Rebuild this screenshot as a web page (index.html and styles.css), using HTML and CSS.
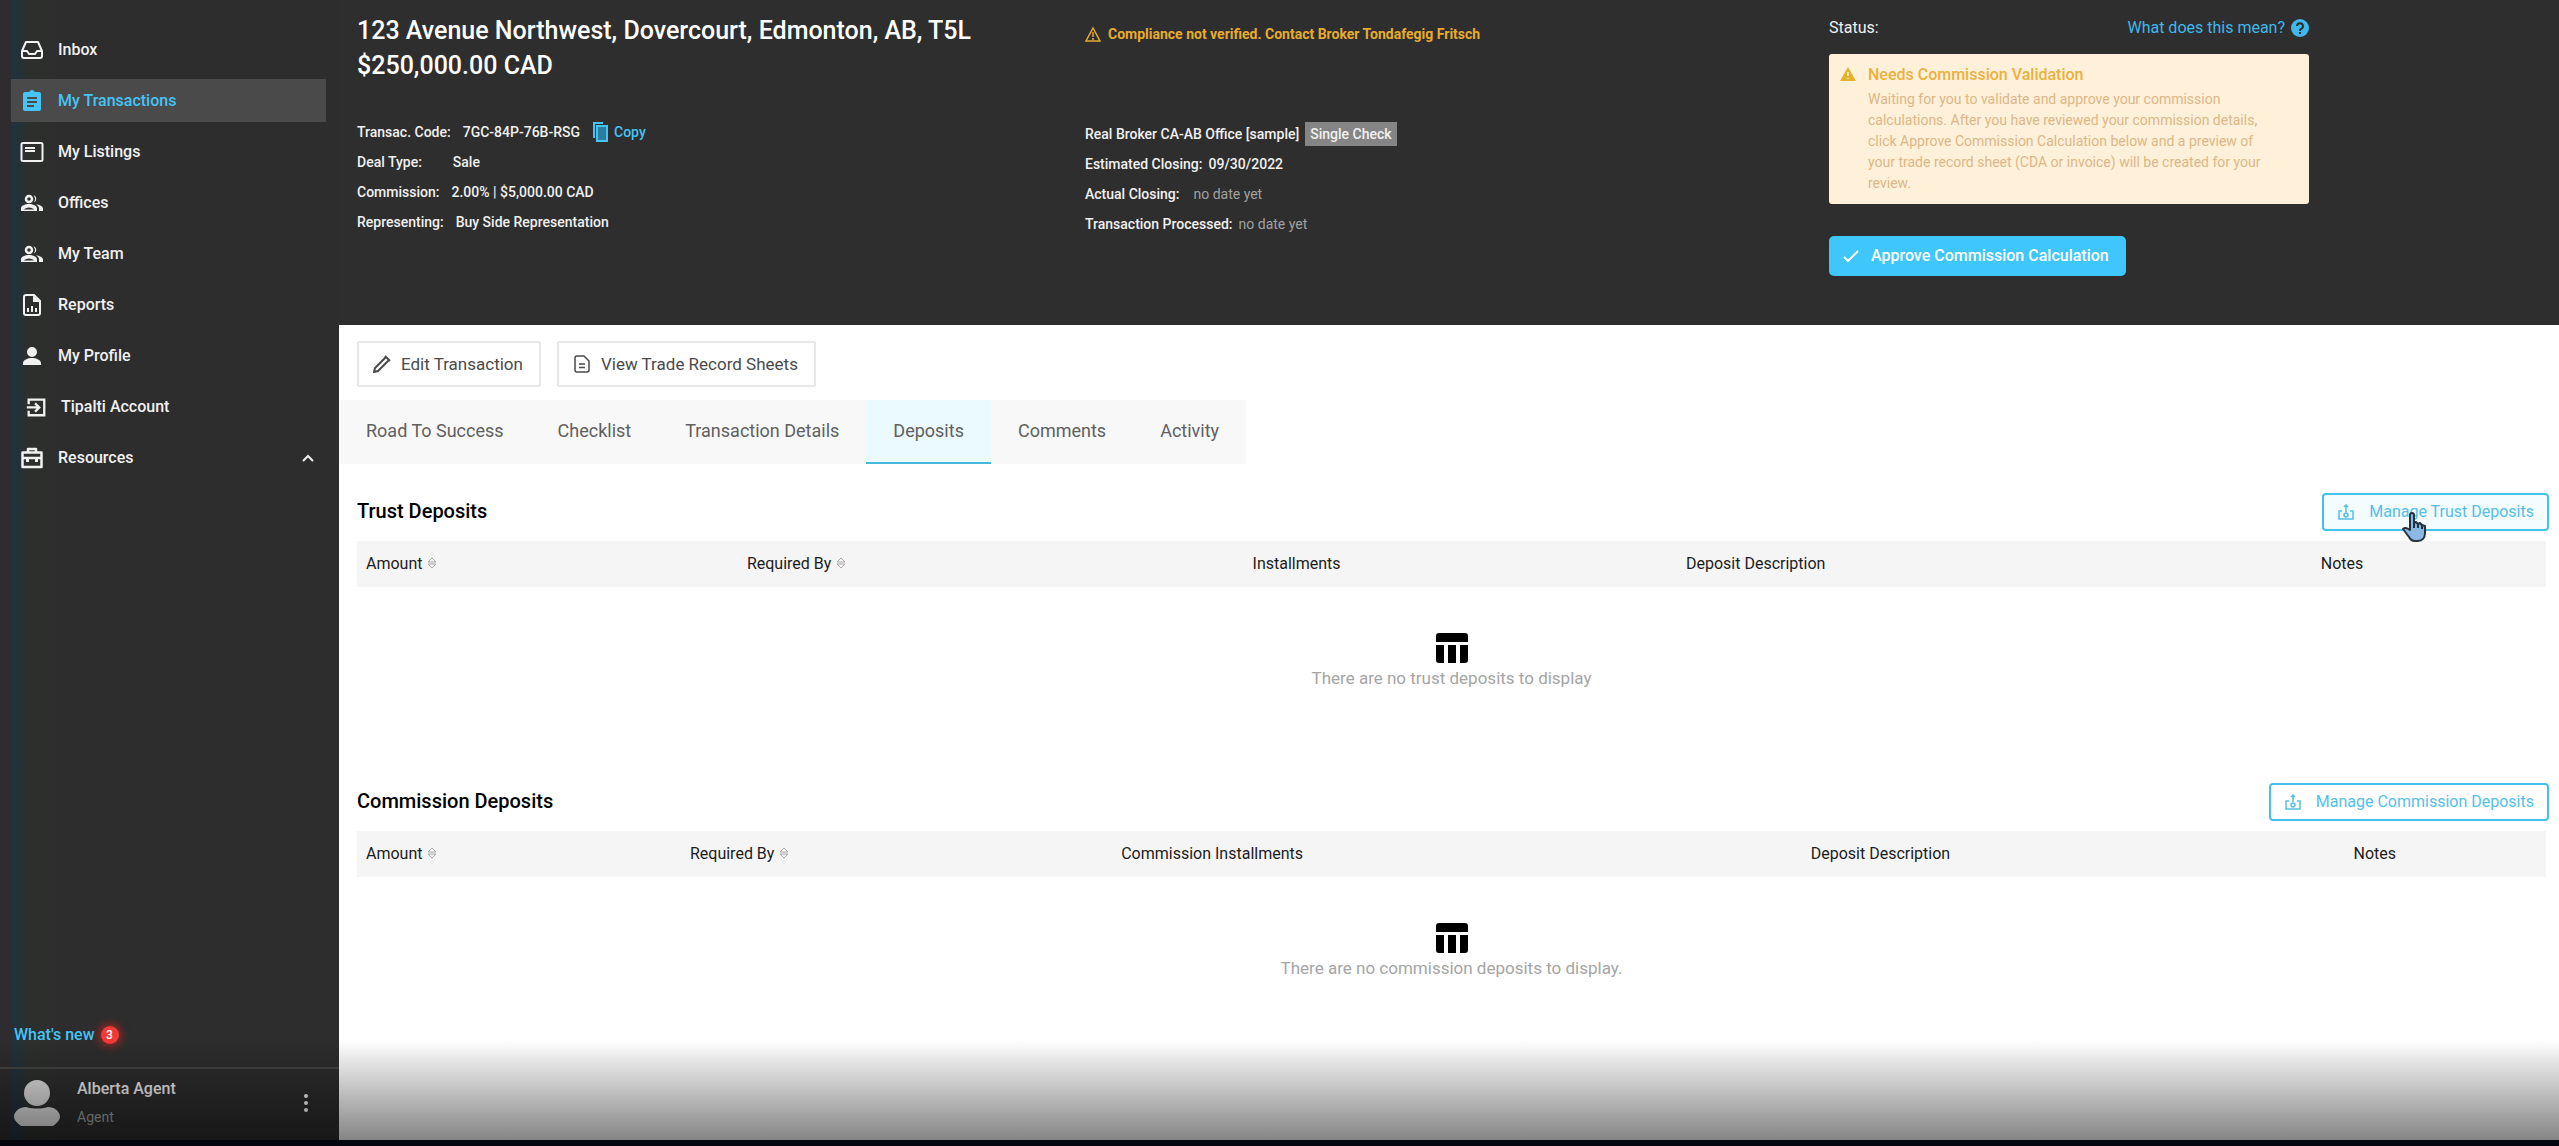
FILE: index.html
```html
<!DOCTYPE html>
<html lang="en">
<head>
<meta charset="utf-8">
<title>Transaction Deposits</title>
<link rel="stylesheet" href="styles.css">
</head>
<body>
<div class="app">
  <aside class="sidebar">
    <nav class="nav" aria-label="Main">
      <a class="nav-item" href="#"><svg class="icon" viewBox="0 0 24 24"><path d="M6 4h12l4 9v5a2 2 0 0 1-2 2H4a2 2 0 0 1-2-2v-5zM2 13h5l2 3h6l2-3h5" fill="none" stroke="currentColor" stroke-width="2" stroke-linejoin="round"/></svg><span>Inbox</span></a>
      <a class="nav-item active" href="#" aria-current="page"><svg class="icon" viewBox="0 0 24 24"><path fill="currentColor" d="M19 3h-4.200a3 3 0 0 0-5.600 0H5a2 2 0 0 0-2 2v15a2 2 0 0 0 2 2h14a2 2 0 0 0 2-2V5a2 2 0 0 0-2-2zm-5 15H7v-2h7zm3-4H7v-2h10zm0-4H7V8h10z"/></svg><span>My Transactions</span></a>
      <a class="nav-item" href="#"><svg class="icon" viewBox="0 0 24 24"><rect x="1.500" y="3" width="21" height="18" rx="1.500" fill="none" stroke="currentColor" stroke-width="2"/><path fill="currentColor" d="M5 7h10v2H5zm0 3h10v2H5z"/></svg><span>My Listings</span></a>
      <a class="nav-item" href="#"><svg class="icon" viewBox="0 0 24 24"><circle cx="9" cy="8" r="3" fill="none" stroke="currentColor" stroke-width="2.500"/><path fill="currentColor" d="M13.500 4.200a4 4 0 0 1 0 7.600 6 6 0 0 0 0-7.600zM1 20v-2.500C1 14.500 5 13 9 13s8 1.500 8 4.500V20zm3-1.500h10c-.5-1-3-2-5-2s-4.500 1-5 2zM16 13.200c3.500.5 7 1.800 7 4.300V20h-4v-2.500c0-1.800-1-3.200-3-4.300z"/></svg><span>Offices</span></a>
      <a class="nav-item" href="#"><svg class="icon" viewBox="0 0 24 24"><circle cx="9" cy="8" r="3" fill="none" stroke="currentColor" stroke-width="2.500"/><path fill="currentColor" d="M13.500 4.200a4 4 0 0 1 0 7.600 6 6 0 0 0 0-7.600zM1 20v-2.500C1 14.500 5 13 9 13s8 1.500 8 4.500V20zm3-1.500h10c-.5-1-3-2-5-2s-4.500 1-5 2zM16 13.200c3.500.5 7 1.800 7 4.300V20h-4v-2.500c0-1.800-1-3.200-3-4.300z"/></svg><span>My Team</span></a>
      <a class="nav-item" href="#"><svg class="icon" viewBox="0 0 24 24"><path d="M14 2H6a2 2 0 0 0-2 2v16a2 2 0 0 0 2 2h12a2 2 0 0 0 2-2V8z" fill="none" stroke="currentColor" stroke-width="2"/><path fill="currentColor" d="M13 2l7 7h-7zM7 15h2v4H7zm4-2h2v6h-2zm4 2h2v4h-2z"/></svg><span>Reports</span></a>
      <a class="nav-item" href="#"><svg class="icon" viewBox="0 0 24 24"><path fill="currentColor" d="M12 3a5 5 0 1 1 0 10 5 5 0 0 1 0-10zM3 21v-2c0-3 5-5 9-5s9 2 9 5v2z"/></svg><span>My Profile</span></a>
      <a class="nav-item indented" href="#"><svg class="icon" viewBox="0 0 24 24"><path d="M4 9V4h17v17H4v-5M2 12.500h13M11 8l4.500 4.500L11 17" fill="none" stroke="currentColor" stroke-width="2.500"/></svg><span>Tipalti Account</span></a>
      <a class="nav-item" href="#"><svg class="icon" viewBox="0 0 24 24"><path d="M8 6V3h8v3M2.500 6.500h19v14.500h-19zM2 12h20" fill="none" stroke="currentColor" stroke-width="2.500" stroke-linejoin="round"/><path fill="currentColor" d="M6 12h3v4H6zm9 0h3v4h-3z"/></svg><span>Resources</span><svg class="chevron" viewBox="0 0 12 12"><path d="M1 9l5-5 5 5" fill="none" stroke="currentColor" stroke-width="2"/></svg></a>
    </nav>
    <a class="whats-new" href="#"><span>What's new</span><span class="count">3</span></a>
    <div class="profile">
      <svg class="avatar" viewBox="0 0 46 46"><circle cx="23" cy="13" r="13"/><path d="M7 46C3 43 0 40 0 37c0-6 6-10 12-10 7 2 15 2 22 0 6 0 12 4 12 10 0 3-3 6-7 9z"/></svg>
      <div class="who"><span class="who-name">Alberta Agent</span><span class="who-role">Agent</span></div>
      <button class="more" aria-label="Account menu"><svg viewBox="0 0 6 20"><circle cx="3" cy="3" r="2"/><circle cx="3" cy="10" r="2"/><circle cx="3" cy="17" r="2"/></svg></button>
    </div>
  </aside>

  <main class="main">
    <header class="summary">
      <section>
        <h1 class="title">123 Avenue Northwest, Dovercourt, Edmonton, AB, T5L<br>$250,000.00 CAD</h1>
        <div class="facts">
          <p><span>Transac. Code:</span><span>7GC-84P-76B-RSG</span><button class="copy"><svg viewBox="0 0 16 20"><path d="M2 16V1h9" fill="none" stroke="currentColor" stroke-width="2"/><rect x="5" y="4" width="10" height="15" fill="#2c7d9d" stroke="currentColor" stroke-width="2"/></svg>Copy</button></p>
          <p class="wide"><span>Deal Type:</span><span>Sale</span></p>
          <p><span>Commission:</span><span>2.00% | $5,000.00 CAD</span></p>
          <p><span>Representing:</span><span>Buy Side Representation</span></p>
        </div>
      </section>
      <section>
        <p class="compliance"><svg viewBox="0 0 16 16"><path d="M8 2l7 13H1zM8 6v5M8 12v2" fill="none" stroke="currentColor" stroke-width="1.500"/></svg>Compliance not verified. Contact Broker Tondafegig Fritsch</p>
        <div class="facts tight">
          <p><span>Real Broker CA-AB Office [sample]</span><span class="tag">Single Check</span></p>
          <p><span>Estimated Closing:</span><span>09/30/2022</span></p>
          <p class="wide"><span>Actual Closing:</span><span class="none">no date yet</span></p>
          <p><span>Transaction Processed:</span><span class="none">no date yet</span></p>
        </div>
      </section>
      <section class="status">
        <div class="status-head"><span>Status:</span><a class="help" href="#">What does this mean?<svg viewBox="0 0 18 18"><circle cx="9" cy="9" r="9" fill="currentColor"/><path d="M6 7a3 3 0 1 1 4 3q-1 .5-1 2M9 13v2" fill="none" stroke="#2e2e2e" stroke-width="2"/></svg></a></div>
        <div class="notice">
          <svg viewBox="0 0 16 16"><path d="M8 1l8 14H0z" fill="#e3b32e"/><path d="M8 6v4M8 12v1" stroke="#fff0da" stroke-width="1.500"/></svg>
          <div><h2>Needs Commission Validation</h2>
          <p>Waiting for you to validate and approve your commission calculations. After you have reviewed your commission details, click Approve Commission Calculation below and a preview of your trade record sheet (CDA or invoice) will be created for your review.</p></div>
        </div>
        <button class="approve"><svg viewBox="0 0 16 16"><path d="M1 9l4 4L15 3" fill="none" stroke="currentColor" stroke-width="2"/></svg>Approve Commission Calculation</button>
      </section>
    </header>

    <div class="content">
      <div class="actions">
        <button class="plain"><svg viewBox="0 0 18 18"><path d="M1 17l1-4L13 2l3 3L5 16zM12 1l5 5" fill="none" stroke="currentColor" stroke-width="2"/></svg>Edit Transaction</button>
        <button class="plain"><svg viewBox="0 0 18 18"><path d="M4 1h7l5 5v9a2 2 0 0 1-2 2H4a2 2 0 0 1-2-2V3a2 2 0 0 1 2-2zM6 9h6M6 12.500h6" fill="none" stroke="currentColor" stroke-width="1.500" stroke-linejoin="round"/></svg>View Trade Record Sheets</button>
      </div>
      <nav class="tabs" aria-label="Transaction sections">
        <a href="#">Road To Success</a><a href="#">Checklist</a><a href="#">Transaction Details</a><a class="current" href="#">Deposits</a><a href="#">Comments</a><a href="#">Activity</a>
      </nav>

      <section class="panel">
        <div class="panel-head"><h2>Trust Deposits</h2>
          <button class="outline hovered"><svg viewBox="0 0 18 18"><path d="M5 8H2v8h14V8h-3M9 9V2M7 4l2-2 2 2" fill="none" stroke="currentColor" stroke-width="1.500"/><circle cx="9" cy="12" r="2" fill="none" stroke="currentColor" stroke-width="1.500"/></svg>Manage Trust Deposits<svg class="pointer" viewBox="0 0 24 30"><path d="M8 17V3a2 2 0 0 1 4 0v8l2-1 2 2 2-1 2 2 3 1v7c0 5-3 8-7 8h-3c-3 0-5-2-6-4l-6-8c1-2 4-1 7 1z" fill="#8bb8e4" stroke="#26323e" stroke-width="2" stroke-linejoin="round"/><path d="M12 10v6M16 11v5M20 13v4" stroke="#26323e" stroke-width="2"/></svg></button></div>
        <table>
          <colgroup><col class="t1"><col class="t2"><col class="t3"><col class="t4"><col></colgroup>
          <thead><tr><th>Amount<svg viewBox="0 0 10 12"><path d="M1 5l4-4 4 4zM1 7l4 4 4-4z" fill="none" stroke="currentColor"/></svg></th><th>Required By<svg viewBox="0 0 10 12"><path d="M1 5l4-4 4 4zM1 7l4 4 4-4z" fill="none" stroke="currentColor"/></svg></th><th>Installments</th><th>Deposit Description</th><th>Notes</th></tr></thead>
          <tbody><tr><td colspan="5"><svg viewBox="0 0 32 30"><path d="M3 0h26a3 3 0 0 1 3 3v6H0V3a3 3 0 0 1 3-3zM0 12h8v18H3a3 3 0 0 1-3-3zM12 12h8v18h-8zM24 12h8v15a3 3 0 0 1-3 3h-5z"/></svg><p>There are no trust deposits to display</p></td></tr></tbody>
        </table>
      </section>

      <section class="panel">
        <div class="panel-head"><h2>Commission Deposits</h2>
          <button class="outline"><svg viewBox="0 0 18 18"><path d="M5 8H2v8h14V8h-3M9 9V2M7 4l2-2 2 2" fill="none" stroke="currentColor" stroke-width="1.500"/><circle cx="9" cy="12" r="2" fill="none" stroke="currentColor" stroke-width="1.500"/></svg>Manage Commission Deposits</button></div>
        <table>
          <colgroup><col class="c1"><col class="c2"><col class="c3"><col class="c4"><col></colgroup>
          <thead><tr><th>Amount<svg viewBox="0 0 10 12"><path d="M1 5l4-4 4 4zM1 7l4 4 4-4z" fill="none" stroke="currentColor"/></svg></th><th>Required By<svg viewBox="0 0 10 12"><path d="M1 5l4-4 4 4zM1 7l4 4 4-4z" fill="none" stroke="currentColor"/></svg></th><th>Commission Installments</th><th>Deposit Description</th><th>Notes</th></tr></thead>
          <tbody><tr><td colspan="5"><svg viewBox="0 0 32 30"><path d="M3 0h26a3 3 0 0 1 3 3v6H0V3a3 3 0 0 1 3-3zM0 12h8v18H3a3 3 0 0 1-3-3zM12 12h8v18h-8zM24 12h8v15a3 3 0 0 1-3 3h-5z"/></svg><p>There are no commission deposits to display.</p></td></tr></tbody>
        </table>
      </section>
    </div>
  </main>
  <div class="fade"></div>
</div>
</body>
</html>
```
FILE: styles.css
```css
* { box-sizing: border-box; }
body, h1, h2, p { margin: 0; font-weight: 500; }
body { font: 16px/20px Roboto, sans-serif; background: #05050d; }
button { font: inherit; cursor: pointer; }
a { color: inherit; text-decoration: none; }
svg { flex: none; display: block; }

.app { position: relative; display: flex; min-height: calc(100vh - 6px); margin-bottom: 6px; }
.fade { position: absolute; left: 0; right: 0; bottom: 0; height: 100px; pointer-events: none; background: linear-gradient(transparent, rgba(0, 0, 0, .48)); }

/* Sidebar */
.sidebar { flex: 0 0 339px; display: flex; flex-direction: column; color: #f1f1f1; font-weight: 500; background: linear-gradient(90deg, #2e2c2e 10px, #23313a 12px, #23313a 18px, #2c302c 28px, #2d2d2d 60px, #2d2d2d); }
.nav { display: flex; flex-direction: column; gap: 8px; padding: 28px 13px 0 11px; }
.nav-item { display: flex; align-items: center; gap: 14px; height: 43px; padding: 0 12px 0 9px; }
.nav-item.active { color: #45c4f5; background: #4a4a4a; }
.nav-item.indented { padding-left: 14px; }
.indented .icon { width: 22px; height: 22px; }
.icon { width: 24px; height: 24px; }
.chevron { width: 12px; height: 12px; margin-left: auto; }
.whats-new { display: flex; align-items: center; gap: 6px; margin-top: auto; padding: 0 14px 22px; color: #45c4f5; }
.count { width: 18px; border-radius: 9px; font-size: 12px; line-height: 18px; text-align: center; color: #fff; background: #f03a35; box-shadow: 0 0 8px 2px #a02824; }
.profile { display: flex; align-items: center; height: 73px; padding: 0 30px 4px 14px; border-top: 2px solid #444; }
.avatar { width: 46px; height: 46px; fill: #e0e0e0; }
.who { display: flex; flex-direction: column; gap: 8px; margin-left: 17px; }
.who-role { font-size: 14px; font-weight: 400; color: #a0a0a0; }
.more { margin-left: auto; padding: 0; border: 0; background: none; }
.more svg { width: 6px; height: 20px; fill: #fff; }

/* Transaction summary */
.main { flex: 1; min-width: 0; display: flex; flex-direction: column; }
.summary { display: grid; grid-template-columns: 728fr 744fr 720fr; min-height: 325px; padding: 12px 10px 0 18px; color: #f1f1f1; font-size: 14px; background: #2e2e2e; }
.title { padding-top: 1px; font-size: 25px; line-height: 35px; color: #fff; }
.facts { margin-top: 37px; display: grid; gap: 6px; }
.facts p { display: flex; align-items: center; gap: 12px; height: 24px; }
.facts.tight p { gap: 6px; }
.facts p.wide { gap: 31px; }
.facts.tight p.wide { gap: 14px; }
.copy { display: flex; align-items: center; gap: 6px; padding: 0; border: 0; color: #45c4f5; background: none; }
.copy svg { width: 16px; height: 20px; }
.compliance { display: flex; align-items: center; gap: 7px; height: 44px; font-weight: 700; color: #e6ac2f; }
.compliance svg { width: 16px; height: 16px; }
.compliance + .facts { margin-top: 66px; }
.tag { padding: 2px 5px; background: #858585; }
.facts .none { font-weight: 400; color: #a2a2a2; }
.status { font-size: 16px; }
.status-head { display: flex; justify-content: space-between; width: 480px; height: 32px; line-height: 32px; }
.help { display: flex; align-items: center; gap: 6px; color: #3fb8ec; }
.help svg { width: 18px; height: 18px; }
.notice { display: flex; gap: 12px; width: 480px; min-height: 150px; margin-top: 10px; padding: 10px 28px 8px 11px; border-radius: 3px; background: #fff0da; }
.notice svg { width: 16px; height: 16px; margin-top: 2px; }
.notice h2 { margin-bottom: 3px; font-size: 16px; line-height: 22px; color: #e9b13f; }
.notice p { font-size: 14px; line-height: 21px; font-weight: 400; color: #dcb787; }
.approve { display: flex; align-items: center; gap: 12px; height: 40px; margin-top: 32px; padding: 0 17px 0 14px; border: 0; border-radius: 5px; font-weight: 500; color: #fff; background: #3fc6fa; }
.approve svg { width: 16px; height: 16px; }

/* Content */
.content { flex: 1; padding: 16px 10px 0 18px; background: #fff; }
.actions { display: flex; gap: 16px; }
.plain { display: flex; align-items: center; gap: 10px; height: 46px; padding: 0 16px 0 14px; border: 2px solid #e8e8e8; border-radius: 2px; font-size: 17px; color: #4a4a4a; background: #fff; }
.plain svg { width: 18px; height: 18px; }
.tabs { display: flex; width: max-content; margin: 13px 0 0 -18px; color: #606060; background: #f8f8f8; }
.tabs a { height: 64px; padding: 0 27px; border-bottom: 2px solid transparent; font-size: 18px; line-height: 62px; }
.tabs a.current { border-color: #45b9dc; background: #eafaff; }
.panel { min-height: 290px; padding-top: 29px; }
.panel-head { display: flex; justify-content: space-between; align-items: center; height: 38px; }
.panel-head h2 { padding-bottom: 3px; font-size: 20px; }
.outline { position: relative; display: flex; align-items: center; gap: 14px; height: 38px; padding: 0 13px; border: 2px solid #45c0ea; border-radius: 4px; color: #55bfe9; background: #fff; }
.outline svg { width: 18px; height: 18px; }
.outline.hovered { background: #f3fcff; }
.outline .pointer { position: absolute; left: 78px; top: 17px; width: 24px; height: 30px; }
table { width: calc(100% - 3px); margin-top: 10px; border-collapse: collapse; table-layout: fixed; }
th { height: 46px; padding: 0 9px; font-weight: 400; text-align: left; color: #1c1c1c; background: #f5f5f5; }
th svg { display: inline-block; width: 10px; height: 12px; margin-left: 5px; color: #aaa; }
td { padding: 46px 0 0; text-align: center; font-size: 17px; color: #a5a5a5; }
td svg { width: 32px; height: 30px; margin: 0 auto 5px; fill: #000; }
td p { font-weight: 400; }
.t1 { width: 17.4%; } .t2 { width: 23.1%; } .t3 { width: 19.8%; } .t4 { width: 29%; }
.c1 { width: 14.8%; } .c2 { width: 19.7%; } .c3 { width: 31.5%; } .c4 { width: 24.8%; }
```
